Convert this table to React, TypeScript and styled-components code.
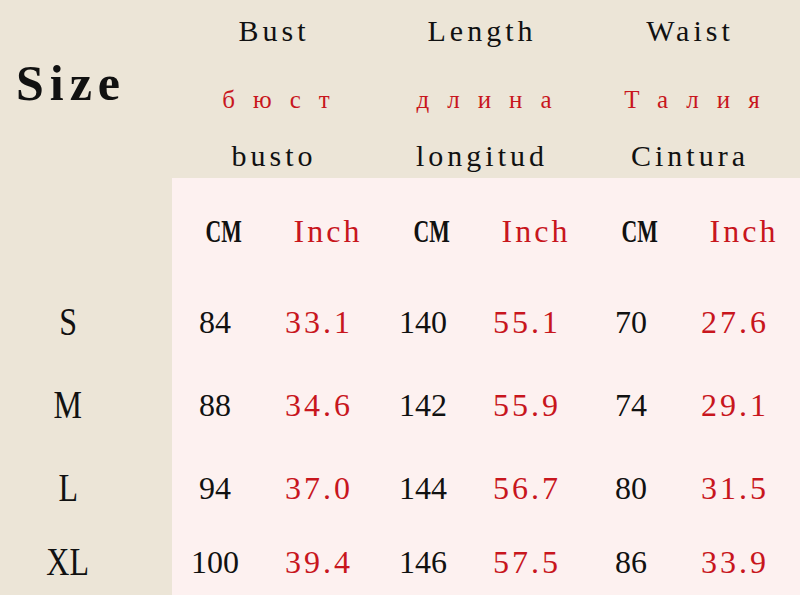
import React from 'react';
import styled, { createGlobalStyle } from 'styled-components';

const GlobalStyle = createGlobalStyle`
  html, body {
    margin: 0;
    padding: 0;
    background: #ece5d7;
  }
  #root {
    width: 800px;
    height: 595px;
    overflow: hidden;
  }
`;

const Chart = styled.div`
  width: 800px;
  height: 595px;
  display: flex;
  flex-direction: column;
  background: #ece5d7;
  font-family: 'Liberation Serif', 'Times New Roman', serif;
  color: #111;
`;

const Header = styled.div`
  display: grid;
  grid-template-columns: 172px repeat(3, 1fr);
  grid-template-rows: 62px 72px 44px;
  padding-right: 4px;
`;

const Cell = styled.div`
  display: flex;
  align-items: center;
  justify-content: center;
  line-height: 1;
  white-space: nowrap;
`;

const SizeTitle = styled(Cell)`
  grid-row: 1 / 4;
  grid-column: 1;
  font-weight: 700;
  font-size: 50px;
  letter-spacing: 6px;
  padding-right: 30px;
  padding-bottom: 12px;
`;

const GroupTitle = styled(Cell)`
  font-size: 30px;
  letter-spacing: 4px;
  padding-right: 4px;
`;

const RuTitle = styled(Cell)`
  font-size: 25px;
  color: #c8161d;
  letter-spacing: 18px;
  padding-left: 18px;
  padding-top: 2px;
`;

const Table = styled.div`
  flex: 1;
  display: grid;
  grid-template-columns: 172px repeat(6, 1fr);
  grid-template-rows: 102px 83px 84px 82px 1fr;
  background: #fdf1f0;
  padding-right: 4px;
`;

const Side = styled(Cell)`
  grid-column: 1;
  background: #ece5d7;
  padding-right: 36px;
`;

const SizeLabel = styled.span`
  display: inline-block;
  font-size: 40px;
  transform: scaleX(0.8);
`;

const Unit = styled(Cell)<{ $red?: boolean }>`
  font-size: 32px;
  padding-top: 4px;
  color: ${({ $red }) => ($red ? '#c8161d' : '#111')};
  letter-spacing: ${({ $red }) => ($red ? '3px' : '0')};
`;

const Condensed = styled.span`
  display: inline-block;
  font-weight: 700;
  transform: scaleX(0.68);
`;

const Value = styled(Cell)<{ $red?: boolean }>`
  font-size: 32px;
  padding-right: 18px;
  color: ${({ $red }) => ($red ? '#c8161d' : '#111')};
  letter-spacing: ${({ $red }) => ($red ? '3px' : '0')};
`;

const groups = [
  { en: 'Bust', ru: 'бюст', es: 'busto' },
  { en: 'Length', ru: 'длина', es: 'longitud' },
  { en: 'Waist', ru: 'Талия', es: 'Cintura' },
];

const rows = [
  { size: 'S', values: ['84', '33.1', '140', '55.1', '70', '27.6'] },
  { size: 'M', values: ['88', '34.6', '142', '55.9', '74', '29.1'] },
  { size: 'L', values: ['94', '37.0', '144', '56.7', '80', '31.5'] },
  { size: 'XL', values: ['100', '39.4', '146', '57.5', '86', '33.9'] },
];

const App = () => {
  return (
    <>
      <GlobalStyle />
      <Chart>
        <Header>
          <SizeTitle>Size</SizeTitle>
          {groups.map((g) => (
            <GroupTitle key={g.en}>{g.en}</GroupTitle>
          ))}
          {groups.map((g) => (
            <RuTitle key={g.ru}>{g.ru}</RuTitle>
          ))}
          {groups.map((g) => (
            <GroupTitle key={g.es}>{g.es}</GroupTitle>
          ))}
        </Header>
        <Table>
          <Side />
          {groups.map((g) => (
            <React.Fragment key={g.en}>
              <Unit><Condensed>CM</Condensed></Unit>
              <Unit $red>Inch</Unit>
            </React.Fragment>
          ))}
          {rows.map((r) => (
            <React.Fragment key={r.size}>
              <Side>
                <SizeLabel>{r.size}</SizeLabel>
              </Side>
              {r.values.map((v, i) => (
                <Value key={i} $red={i % 2 === 1}>{v}</Value>
              ))}
            </React.Fragment>
          ))}
        </Table>
      </Chart>
    </>
  );
};

export default App;
